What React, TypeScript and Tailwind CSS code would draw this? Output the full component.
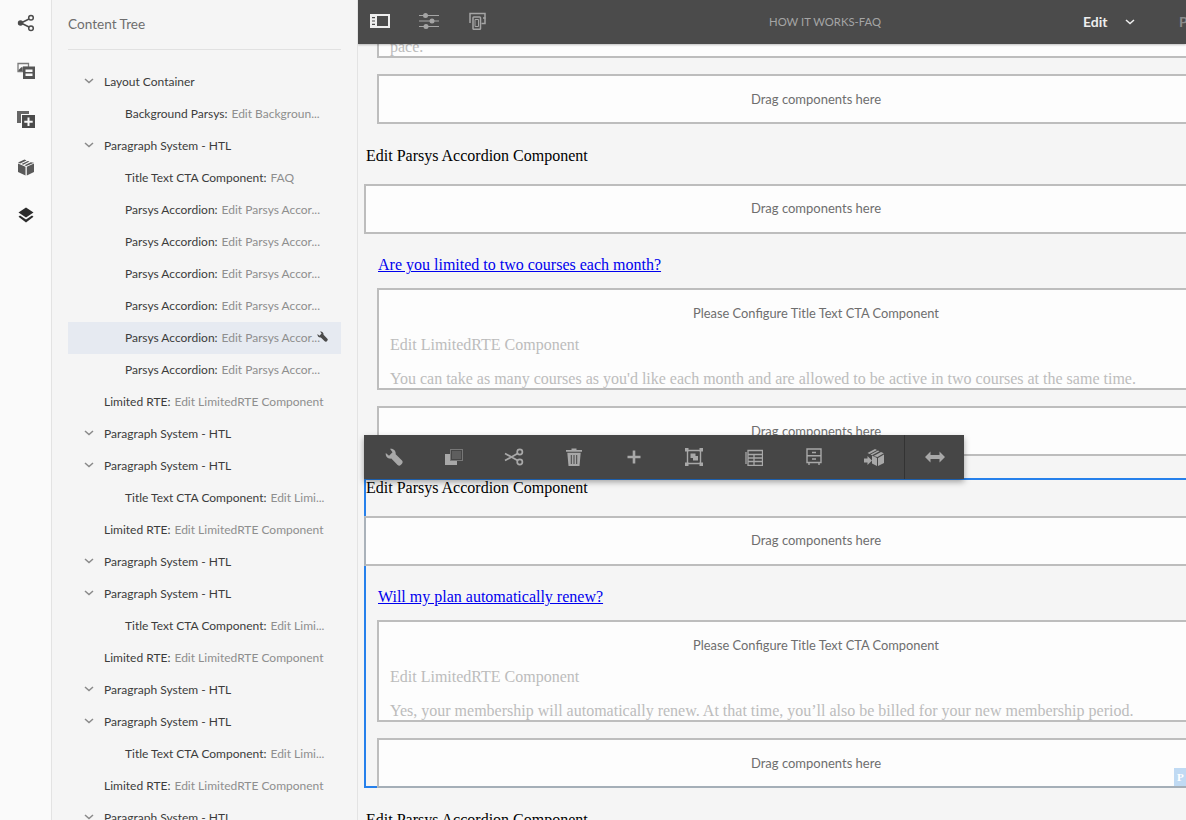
import React from "react";

const sans = "font-['Lato','Noto_Sans',sans-serif]";

type Row = { depth: 0 | 1; open?: boolean; name: string; note?: string; active?: boolean };

const accordion = "Edit Parsys Accor...";
const ctaNote = "Edit Limi...";
const rte = "Edit LimitedRTE Component";

const rows: Row[] = [
  { depth: 0, open: true, name: "Layout Container" },
  { depth: 1, name: "Background Parsys:", note: "Edit Backgroun..." },
  { depth: 0, open: true, name: "Paragraph System - HTL" },
  { depth: 1, name: "Title Text CTA Component:", note: "FAQ" },
  { depth: 1, name: "Parsys Accordion:", note: accordion },
  { depth: 1, name: "Parsys Accordion:", note: accordion },
  { depth: 1, name: "Parsys Accordion:", note: accordion },
  { depth: 1, name: "Parsys Accordion:", note: accordion },
  { depth: 1, name: "Parsys Accordion:", note: accordion, active: true },
  { depth: 1, name: "Parsys Accordion:", note: accordion },
  { depth: 0, name: "Limited RTE:", note: rte },
  { depth: 0, open: true, name: "Paragraph System - HTL" },
  { depth: 0, open: true, name: "Paragraph System - HTL" },
  { depth: 1, name: "Title Text CTA Component:", note: ctaNote },
  { depth: 0, name: "Limited RTE:", note: rte },
  { depth: 0, open: true, name: "Paragraph System - HTL" },
  { depth: 0, open: true, name: "Paragraph System - HTL" },
  { depth: 1, name: "Title Text CTA Component:", note: ctaNote },
  { depth: 0, name: "Limited RTE:", note: rte },
  { depth: 0, open: true, name: "Paragraph System - HTL" },
  { depth: 0, open: true, name: "Paragraph System - HTL" },
  { depth: 1, name: "Title Text CTA Component:", note: ctaNote },
  { depth: 0, name: "Limited RTE:", note: rte },
  { depth: 0, open: true, name: "Paragraph System - HTL" },
];

function Chevron({ className }: { className?: string }) {
  return (
    <svg width="10" height="6" viewBox="0 0 10 6" fill="none" className={className}>
      <path d="M1 1l4 3.6L9 1" stroke="currentColor" strokeWidth="1.5" />
    </svg>
  );
}

function Wrench({ size = 18, className }: { size?: number; className?: string }) {
  return (
    <svg width={size} height={size} viewBox="0 0 18 18" fill="currentColor" className={className}>
      <path d="M5 .8C8.200 .1 11.200 2.800 10.700 6.200L17 12.600C17.900 13.500 17.900 14.800 17 15.700L15.700 17C14.800 17.900 13.500 17.800 12.600 16.900L6.300 10.600C3 11.200 .2 8.400 .8 5L4 7.800 7.500 4.200z" />
    </svg>
  );
}

function RailIcons() {
  return (
    <div className="flex flex-col items-center gap-[30px] pt-[14px] text-[#4b4b4b]">
      <svg width="18" height="18" viewBox="0 0 18 18" fill="none" stroke="currentColor" strokeWidth="1.5">
        <path d="M4 9l10-5M4 9l10 5" />
        <circle cx="3.500" cy="9" r="2.700" fill="currentColor" stroke="none" />
        <circle cx="14" cy="3.800" r="2.300" fill="#fafafa" />
        <circle cx="14" cy="14.200" r="2.300" fill="#fafafa" />
      </svg>
      <svg width="18" height="18" viewBox="0 0 18 18" fill="none">
        <path d="M1 1.500h10.500v4H6v4H1z" stroke="#7a7a7a" strokeWidth="1.300" />
        <path d="M1.500 8l3-3 1 1v3h-4z" fill="#5a5a5a" />
        <path d="M6 4.500h12V17H6zM8.500 7.500h7v2.500h-7zm0 4h7V14h-7z" fill="#555555" fillRule="evenodd" />
      </svg>
      <svg width="18" height="18" viewBox="0 0 18 18" fill="currentColor">
        <path d="M0 1h12v3H4v9H0z" opacity=".85" />
        <path d="M5 5h13v13H5zm5.500 2.500v3.200H7.300v2h3.200V16h2v-3.300h3.200v-2h-3.200V7.500z" fillRule="evenodd" />
      </svg>
      <svg width="18" height="18" viewBox="0 0 18 18" fill="currentColor" className="text-[#5a5a5a]">
        <path d="M1 5.500L8.500 8.800v8.700L1 14zM9.800 8.800L17 5.500V14l-7.200 3.500z" />
        <path d="M1 4.600L7.500 1.500l2 .9-6.400 3.100zM4.500 6l6.400-3.100 1.600.7L6.200 6.800zM7.500 7.300l6.300-3.100L17 4.800 9.200 8z" />
      </svg>
      <svg width="18" height="18" viewBox="0 0 18 18" fill="currentColor" className="text-[#2c2c2c]">
        <path d="M9 1.500l7.500 5L9 11.500l-7.500-5z" />
        <path d="M3 9.500l6 4 6-4 1.500 1.200L9 16.500l-7.500-5.800z" />
      </svg>
    </div>
  );
}

function TreeRow({ row }: { row: Row }) {
  return (
    <div
      className={`relative flex h-8 shrink-0 items-center whitespace-nowrap text-[12px] ${
        row.depth === 0 ? "pl-9" : "pl-[57px]"
      } ${row.active ? "bg-[#e6eaf1]" : ""}`}
    >
      {row.open && <Chevron className="absolute left-4 top-[12px] text-[#8a8a8a]" />}
      <span className="text-[#3c3c3c]">{row.name}</span>
      {row.note && <span className="ml-1 text-[#8e8e8e]">{row.note}</span>}
      {row.active && <Wrench size={11} className="absolute left-[249px] top-[9px] text-[#4b4b4b]" />}
    </div>
  );
}

function Sidebar() {
  return (
    <aside className={`flex h-full w-[306px] shrink-0 flex-col overflow-hidden border-r border-[#e3e3e3] bg-[#f5f5f5] pl-4 pr-4 ${sans}`}>
      <div className="flex h-[50px] shrink-0 items-center border-b border-[#e1e1e1] text-[13.6px] text-[#6e6e6e]">
        Content Tree
      </div>
      <div className="flex flex-col pt-4">
        {rows.map((row, i) => (
          <TreeRow key={i} row={row} />
        ))}
      </div>
    </aside>
  );
}

function TopBar() {
  return (
    <header className={`relative z-10 flex h-11 shrink-0 items-center bg-[#4b4b4b] shadow-[0_1px_2px_rgba(0,0,0,0.25)] ${sans}`}>
      <div className="flex items-center gap-[29px] pl-3 pb-[2px] text-[#a5a5a5]">
        <svg width="20" height="16" viewBox="0 0 20 16" className="text-[#eeeeee]" fill="currentColor">
          <path d="M0 1h20v14H0zM7 3v10h11V3zM2 4v1.200h3V4zm0 3.400v1.200h3V7.400zm0 3.400V12h3v-1.200z" fillRule="evenodd" />
        </svg>
        <svg width="20" height="16" viewBox="0 0 20 16" fill="currentColor">
          <path d="M0 2h20v1H0zM0 7.500h20v1H0zM0 13h20v1H0z" />
          <circle cx="6.500" cy="2.500" r="2.500" />
          <circle cx="13" cy="8" r="2.500" />
          <circle cx="7" cy="13.500" r="2.500" />
        </svg>
        <svg width="18" height="18" viewBox="0 0 18 18" fill="none" stroke="currentColor" strokeWidth="1.500">
          <path d="M2 11V1.500h15v10h-3.500" />
          <path d="M15 6h2.500" />
          <rect x="5" y="5" width="7.500" height="12.300" rx=".8" fill="#4b4b4b" />
          <path d="M7 7.500h3.500v7H7z" strokeWidth="1" />
        </svg>
      </div>
      <div className="absolute left-[411px] top-[14px] text-[11.3px] leading-4 text-[#a5a5a5]">HOW IT WORKS-FAQ</div>
      <div className="absolute left-[725px] top-[13px] text-[14px] font-bold leading-[18px] text-[#eeeeee]">Edit</div>
      <Chevron className="absolute left-[767px] top-[19px] text-[#eeeeee]" />
      <div className="absolute left-[821px] top-[13px] text-[14px] font-bold leading-[18px] text-[#8a8a8a]">P</div>
    </header>
  );
}

function DragBox({ inset, selected }: { inset?: boolean; selected?: boolean }) {
  return (
    <div
      className={`relative z-[1] flex h-[50px] items-center justify-center border-2 border-[#bdbdbd] bg-[#fdfdfd] text-[13px] text-[#6e6e6e] ${sans} ${
        inset ? "ml-[13px] w-[878px] pt-[2px]" : "w-[904px]"
      } ${selected ? (inset ? "border-b-[#a5afb8]" : "border-l-[#aab2ba]") : ""}`}
    >
      Drag components here
    </div>
  );
}

function Section({ question, answer, selected }: { question: string; answer: string; selected?: boolean }) {
  return (
    <section className="relative w-[904px]">
      <div className="relative z-[1] h-[38px] pl-[2px] pt-px text-[16px] leading-[18px] text-black">Edit Parsys Accordion Component</div>
      <DragBox selected={selected} />
      <a className="relative z-[1] ml-[14px] mt-[22px] block text-[16px] leading-[18px] text-[#0000ee] underline">{question}</a>
      <div className="relative z-[1] ml-[13px] mt-[14px] h-[102px] w-[878px] overflow-hidden border-2 border-[#bdbdbd] bg-[#fdfdfd]">
        <div className={`pt-[14px] text-center text-[12.85px] leading-[18px] text-[#6e6e6e] ${sans}`}>
          Please Configure Title Text CTA Component
        </div>
        <div className="mt-[14px] pl-[11px] text-[16px] leading-[18px] text-[#bcbcbc]">Edit LimitedRTE Component</div>
        <div className="mt-4 pl-[11px] text-[16px] leading-[18px] text-[#bcbcbc]">{answer}</div>
      </div>
      <div className="mt-4">
        <DragBox inset selected={selected} />
      </div>
      {selected && (
        <div className="pointer-events-none absolute inset-0 border-2 border-[#2680eb]">
          <div className="absolute bottom-0 right-[80px] z-[2] flex h-[18px] w-3 items-center overflow-hidden bg-[#c0daf3] pl-[3px] text-[11px] font-bold text-white">P</div>
        </div>
      )}
    </section>
  );
}

function ActionBar() {
  return (
    <div className="absolute left-[6px] top-[435px] z-20 flex h-11 w-[600px] items-center bg-[#464646] text-[#a8a8a8] shadow-[0_3px_6px_rgba(0,0,0,0.35)]">
      <Tool>
        <Wrench size={18} />
      </Tool>
      <Tool>
        <svg width="18" height="18" viewBox="0 0 18 18" fill="currentColor">
          <path d="M0 6h5v7h7v4H0z" />
          <rect x="5.500" y="1.500" width="12" height="11" fill="none" stroke="currentColor" strokeDasharray="1 1" />
          <path d="M7 3h9v8H7z" opacity=".25" />
        </svg>
      </Tool>
      <Tool>
        <svg width="20" height="18" viewBox="0 0 20 18" fill="none" stroke="currentColor" strokeWidth="1.700">
          <circle cx="15.800" cy="4" r="2.600" />
          <circle cx="15.800" cy="14" r="2.600" />
          <path d="M13.600 5.600L1 12.600M13.600 12.400L1 5.400" />
        </svg>
      </Tool>
      <Tool>
        <svg width="16" height="18" viewBox="0 0 16 18" fill="currentColor">
          <path d="M0 2h16v1.800H0zM5.500 .4h5V2h-5zM1.300 4.800h13.400L13.500 18h-11zM4.800 7v9h1V7zm2.700 0v9h1V7zm2.700 0v9h1V7z" fillRule="evenodd" />
        </svg>
      </Tool>
      <Tool>
        <svg width="14" height="14" viewBox="0 0 14 14" fill="currentColor">
          <path d="M5.700 .5h2.600v5.200h5.200v2.600H8.300v5.200H5.700V8.300H.5V5.700h5.200z" />
        </svg>
      </Tool>
      <Tool>
        <svg width="18" height="18" viewBox="0 0 18 18" fill="none" stroke="currentColor" strokeWidth="1.400">
          <path d="M2.500 2.500h13v13h-13z" />
          <path d="M0 0h3.500v3.500H0zM14.500 0H18v3.500h-3.500zM0 14.500h3.500V18H0zM14.500 14.500H18V18h-3.500z" fill="currentColor" stroke="none" />
          <path d="M5.500 5.500h5v2.500h2.500v4.500H8v-2.500H5.500z" fill="currentColor" stroke="none" />
        </svg>
      </Tool>
      <Tool>
        <svg width="18" height="18" viewBox="0 0 18 18" fill="none" stroke="currentColor" strokeWidth="1.300">
          <path d="M3 2.500h14.500v15H3zM1 4v12M3 6.500h14.500M3 10h14.500M3 13.500h14.500M9 6.500v11" />
        </svg>
      </Tool>
      <Tool>
        <svg width="16" height="18" viewBox="0 0 16 18" fill="none" stroke="currentColor" strokeWidth="1.400">
          <path d="M1 1h14v13.500H1zM1 7.700h14M6 4.500h4M6 11h4M3 14.500V17M13 14.500V17" />
        </svg>
      </Tool>
      <Tool>
        <svg width="20" height="18" viewBox="0 0 20 18" fill="currentColor">
          <path d="M8 7.500l5 2.500v8l-5-2.500zM14 10l6-3.500V15l-6 3z" />
          <path d="M3.500 5L11 1l2 1-7.500 4zM6.500 6.500L14 2.500l1.500.8L8 7.300zM9.500 8L17 4l2.800 1.300L13.500 9z" />
          <path d="M0 10.500h3.500V8L8 12.500 3.500 17v-2.500H0z" />
        </svg>
      </Tool>
      <div className="flex h-11 w-[60px] items-center justify-center border-l border-[#333333]">
        <svg width="20" height="12" viewBox="0 0 20 12" fill="currentColor">
          <path d="M0 6l5.500-5.500V4h9V.5L20 6l-5.500 5.500V8h-9v3.500z" />
        </svg>
      </div>
    </div>
  );
}

function Tool({ children }: { children: React.ReactNode }) {
  return <div className="flex h-11 w-[60px] items-center justify-center">{children}</div>;
}

export default function App() {
  return (
    <div className="flex h-[820px] w-[1186px] overflow-hidden bg-[#f5f5f5] font-['Liberation_Serif',serif]">
      <nav className="h-full w-[52px] shrink-0 border-r border-[#e3e3e3] bg-[#fafafa]">
        <RailIcons />
      </nav>
      <Sidebar />
      <main className="relative flex h-full min-w-0 flex-1 flex-col overflow-hidden">
        <TopBar />
        <div className="flex flex-col gap-[22px] pl-[6px]">
          <div>
            <div className="ml-[13px] h-[14px] w-[878px] overflow-hidden border-x-2 border-b-2 border-[#bdbdbd] bg-[#fdfdfd] pl-[11px] text-[16px] leading-[18px] text-[#bcbcbc]">
              <div className="-mt-[6px]">pace.</div>
            </div>
            <div className="mt-4">
              <DragBox inset />
            </div>
          </div>
          <Section
            question="Are you limited to two courses each month?"
            answer="You can take as many courses as you'd like each month and are allowed to be active in two courses at the same time."
          />
          <Section
            selected
            question="Will my plan automatically renew?"
            answer="Yes, your membership will automatically renew. At that time, you’ll also be billed for your new membership period."
          />
          <div className="h-[18px] pl-[2px] pt-px text-[16px] leading-[18px] text-black">Edit Parsys Accordion Component</div>
        </div>
        <ActionBar />
      </main>
    </div>
  );
}
